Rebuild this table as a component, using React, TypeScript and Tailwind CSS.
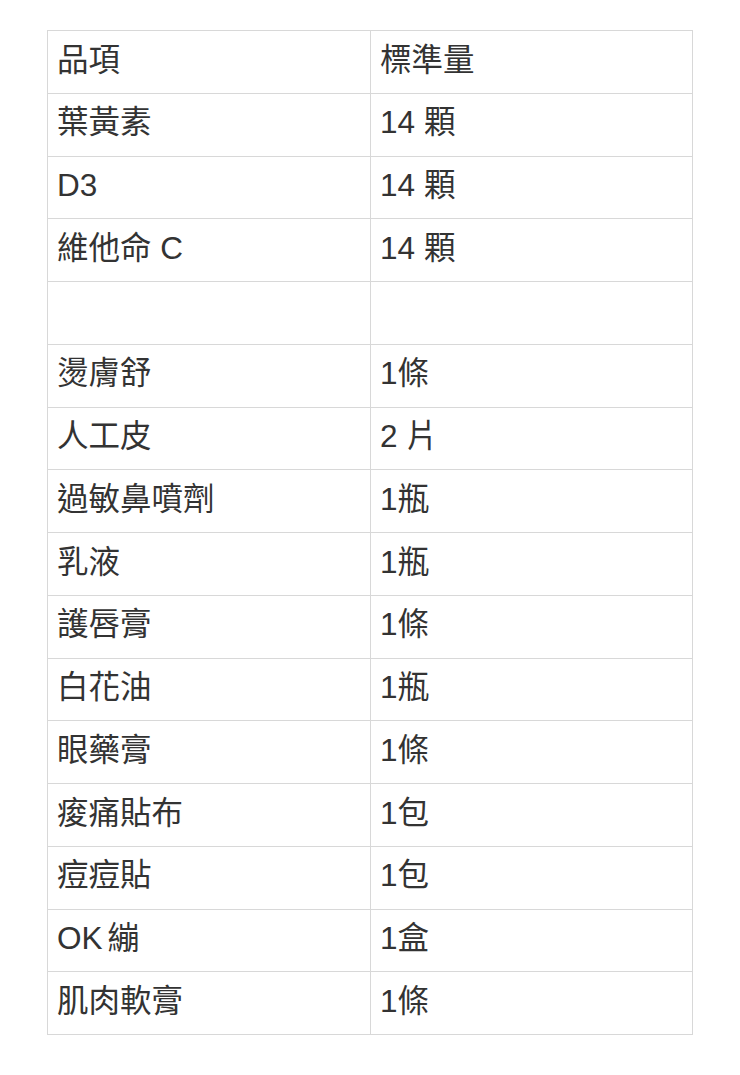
const gap = (a: string, b: string, g: string) => (
  <>
    {a}
    <span className={g}>{b}</span>
  </>
);

const rows: [React.ReactNode, React.ReactNode][] = [
  ["品項", "標準量"],
  ["葉黃素", gap("14", "顆", "ml-[9px]")],
  ["D3", gap("14", "顆", "ml-[9px]")],
  ["維他命 C", gap("14", "顆", "ml-[9px]")],
  ["", ""],
  ["燙膚舒", "1條"],
  ["人工皮", "2 片"],
  ["過敏鼻噴劑", "1瓶"],
  ["乳液", "1瓶"],
  ["護唇膏", "1條"],
  ["白花油", "1瓶"],
  ["眼藥膏", "1條"],
  ["痠痛貼布", "1包"],
  ["痘痘貼", "1包"],
  [gap("OK", "繃", "ml-[5px]"), "1盒"],
  ["肌肉軟膏", "1條"],
];

export default function App() {
  return (
    <div
      className="w-[740px] h-[1075px] bg-white pt-[30px] pl-[47px]"
      style={{ fontFamily: '"Liberation Sans", "Noto Sans CJK TC", sans-serif' }}
    >
      <table className="border-collapse w-[645px] table-fixed">
        <colgroup>
          <col className="w-[323px]" />
          <col className="w-[322px]" />
        </colgroup>
        <tbody>
          {rows.map(([a, b], i) => (
            <tr key={i} className="h-[62.75px]">
              <td className="border border-[#d8d8d8] pl-[9px] pb-[3px] text-[31.5px] leading-none text-[#333333] align-middle whitespace-nowrap">
                {a}
              </td>
              <td className="border border-[#d8d8d8] pl-[9px] pb-[3px] text-[31.5px] leading-none text-[#333333] align-middle whitespace-nowrap">
                {b}
              </td>
            </tr>
          ))}
        </tbody>
      </table>
    </div>
  );
}
